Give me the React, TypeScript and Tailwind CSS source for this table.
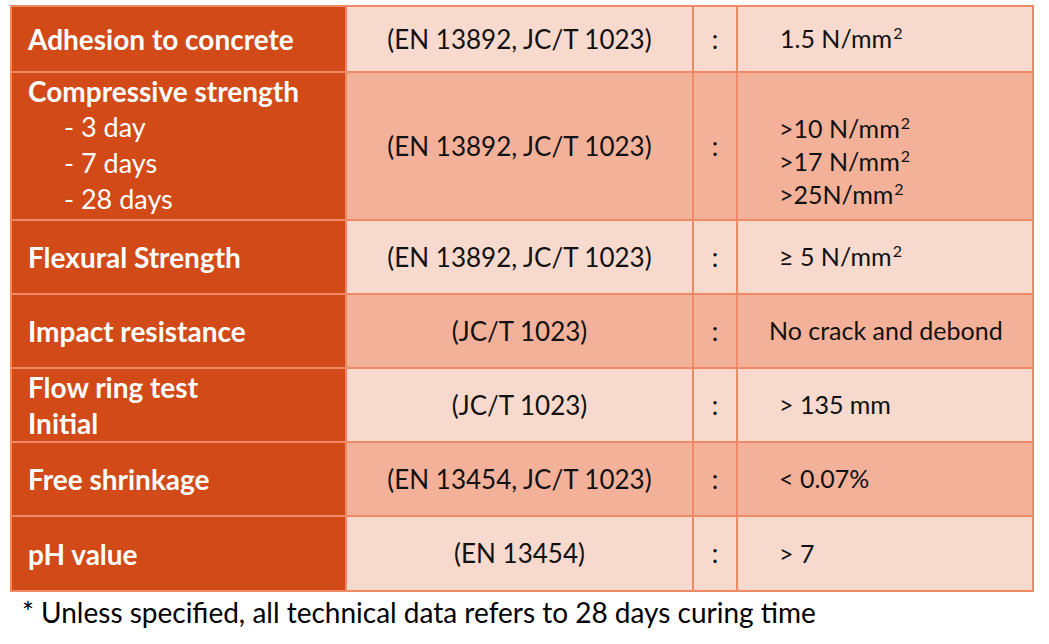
import React from "react";

type Row = {
  label: React.ReactNode;
  method: string;
  value: React.ReactNode;
  tone: "light" | "mid";
  h: string;
};

const sq = <span className="text-[16px] relative -top-[9px] leading-none ml-[1px]">2</span>;

const rows: Row[] = [
  {
    label: <p className="font-bold">Adhesion to concrete</p>,
    method: "(EN 13892, JC/T 1023)",
    value: <p className="pl-[42px]">1.5 N/mm{sq}</p>,
    tone: "light",
    h: "h-[64px]",
  },
  {
    label: (
      <div className="leading-[36px] -mt-[2px]">
        <p className="font-bold">Compressive strength</p>
        <p className="pl-[36px] text-[27px]">- 3 day</p>
        <p className="pl-[36px] text-[27px]">- 7 days</p>
        <p className="pl-[36px] text-[27px]">- 28 days</p>
      </div>
    ),
    method: "(EN 13892, JC/T 1023)",
    value: (
      <div className="pl-[41px] pt-[31px] leading-[33px]">
        <p>&gt;10 N/mm{sq}</p>
        <p>&gt;17 N/mm{sq}</p>
        <p>&gt;25N/mm{sq}</p>
      </div>
    ),
    tone: "mid",
    h: "h-[146px]",
  },
  {
    label: <p className="font-bold">Flexural Strength</p>,
    method: "(EN 13892, JC/T 1023)",
    value: <p className="pl-[41px]">≥ 5 N/mm{sq}</p>,
    tone: "light",
    h: "h-[72px]",
  },
  {
    label: <p className="font-bold">Impact resistance</p>,
    method: "(JC/T 1023)",
    value: <p className="pl-[31px]">No crack and debond</p>,
    tone: "mid",
    h: "h-[72px]",
  },
  {
    label: (
      <div className="font-bold leading-[36px]">
        <p>Flow ring test</p>
        <p>Initial</p>
      </div>
    ),
    method: "(JC/T 1023)",
    value: <p className="pl-[41px]">&gt; 135 mm</p>,
    tone: "light",
    h: "h-[72px]",
  },
  {
    label: <p className="font-bold">Free shrinkage</p>,
    method: "(EN 13454, JC/T 1023)",
    value: <p className="pl-[41px]">&lt; 0.07%</p>,
    tone: "mid",
    h: "h-[72px]",
  },
  {
    label: <p className="font-bold">pH value</p>,
    method: "(EN 13454)",
    value: <p className="pl-[41px]">&gt; 7</p>,
    tone: "light",
    h: "h-[73px]",
  },
];

export default function App() {
  return (
    <div className="w-[1049px] h-[644px] bg-white font-['Lato','Liberation_Sans',sans-serif] text-[#111]">
      <div className="ml-[10px] pt-[5px]">
        {/* spec table */}
        <div className="w-[1024px] grid grid-cols-[333px_345px_42px_294px] gap-[2px] p-[2px] bg-[#ee8b66]">
          {rows.map((r, i) => {
            const bg = r.tone === "light" ? "bg-[#f8d9cd]" : "bg-[#f3b19a]";
            return (
              <React.Fragment key={i}>
                <div className={`${r.h} bg-[#d14a18] text-white text-[28px] pl-[16px] flex flex-col justify-center`}>
                  {r.label}
                </div>
                <div className={`${bg} text-[26px] flex items-center justify-center`}>{r.method}</div>
                <div className={`${bg} text-[26px] flex items-center justify-center`}>:</div>
                <div className={`${bg} text-[25px] flex flex-col justify-center`}>{r.value}</div>
              </React.Fragment>
            );
          })}
        </div>
        <p className="pl-[12px] pt-[2px] text-[28px] leading-[36px] text-black">
          * Unless specified, all technical data refers to 28 days curing time
        </p>
      </div>
    </div>
  );
}
